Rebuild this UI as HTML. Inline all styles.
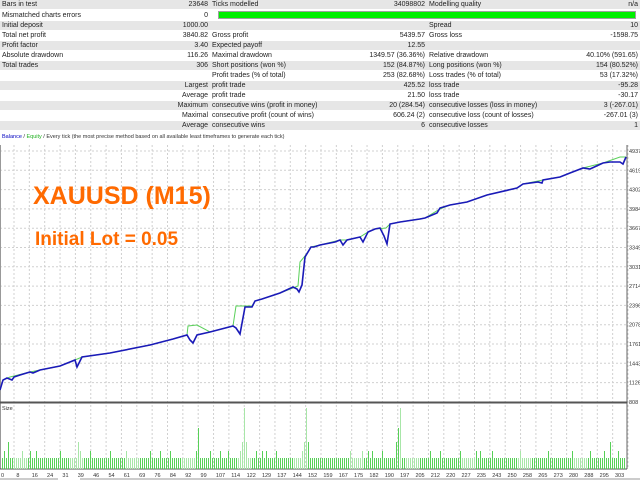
<!DOCTYPE html>
<html><head><meta charset="utf-8"><style>
*{margin:0;padding:0;box-sizing:border-box}
body{width:640px;height:480px;overflow:hidden;background:#fff;font-family:"Liberation Sans",sans-serif;position:relative}
table{position:absolute;left:0;top:0;width:640px;border-collapse:collapse;font-size:7px;color:#222}
td{height:9.85px;line-height:9px;padding:0 2px;white-space:nowrap;border-bottom:1px solid #fff}
tr:nth-child(odd) td{background:#e6e6e6}
.r{text-align:right}
.big{position:absolute;color:#ff6a00;font-weight:bold}
</style></head><body>
<table>
<colgroup><col style="width:210px"><col style="width:217px"><col style="width:213px"></colgroup>
<tr><td>Bars in test<span style="float:right">23648</span></td><td>Ticks modelled<span style="float:right">34098802</span></td><td>Modelling quality<span style="float:right">n/a</span></td></tr>
<tr><td>Mismatched charts errors<span style="float:right">0</span></td><td colspan="2" style="padding:1px 4px 1px 8px"><div style="background:#00f000;height:8px;border:1px solid #a0a0a0"></div></td></tr>
<tr><td>Initial deposit<span style="float:right">1000.00</span></td><td></td><td>Spread<span style="float:right">10</span></td></tr>
<tr><td>Total net profit<span style="float:right">3840.82</span></td><td>Gross profit<span style="float:right">5439.57</span></td><td>Gross loss<span style="float:right">-1598.75</span></td></tr>
<tr><td>Profit factor<span style="float:right">3.40</span></td><td>Expected payoff<span style="float:right">12.55</span></td><td></td></tr>
<tr><td>Absolute drawdown<span style="float:right">116.26</span></td><td>Maximal drawdown<span style="float:right">1349.57 (36.36%)</span></td><td>Relative drawdown<span style="float:right">40.10% (591.65)</span></td></tr>
<tr><td>Total trades<span style="float:right">306</span></td><td>Short positions (won %)<span style="float:right">152 (84.87%)</span></td><td>Long positions (won %)<span style="float:right">154 (80.52%)</span></td></tr>
<tr><td></td><td>Profit trades (% of total)<span style="float:right">253 (82.68%)</span></td><td>Loss trades (% of total)<span style="float:right">53 (17.32%)</span></td></tr>
<tr><td class="r">Largest</td><td>profit trade<span style="float:right">425.52</span></td><td>loss trade<span style="float:right">-95.28</span></td></tr>
<tr><td class="r">Average</td><td>profit trade<span style="float:right">21.50</span></td><td>loss trade<span style="float:right">-30.17</span></td></tr>
<tr><td class="r">Maximum</td><td>consecutive wins (profit in money)<span style="float:right">20 (284.54)</span></td><td>consecutive losses (loss in money)<span style="float:right">3 (-267.01)</span></td></tr>
<tr><td class="r">Maximal</td><td>consecutive profit (count of wins)<span style="float:right">606.24 (2)</span></td><td>consecutive loss (count of losses)<span style="float:right">-267.01 (3)</span></td></tr>
<tr><td class="r">Average</td><td>consecutive wins<span style="float:right">6</span></td><td>consecutive losses<span style="float:right">1</span></td></tr>
</table>
<div style="position:absolute;left:2px;top:134px;font-size:5.5px;color:#333;white-space:nowrap"><span style="color:#0000c0">Balance</span> / <span style="color:#20b020">Equity</span> / Every tick (the most precise method based on all available least timeframes to generate each tick)</div>
<svg id="c" width="640" height="480" style="position:absolute;left:0;top:0" xmlns="http://www.w3.org/2000/svg" font-family="Liberation Sans, sans-serif" font-size="5.5">
<g id="grid" stroke="#d0d0d0" stroke-width="1" stroke-dasharray="2,2"></g>
<line x1="0.5" y1="145" x2="0.5" y2="469" stroke="#999"/>
<line x1="627" y1="145" x2="627" y2="469" stroke="#666"/>
<line x1="0" y1="402.5" x2="627" y2="402.5" stroke="#555" stroke-width="2"/>
<line x1="0" y1="469" x2="627" y2="469" stroke="#555"/>
<line x1="0" y1="479" x2="58" y2="479" stroke="#999"/>
<line x1="80" y1="479" x2="640" y2="479" stroke="#999"/>
<text x="2" y="410" fill="#333">Size</text>
<g id="bars"></g>
<g id="labels" fill="#333"></g>
<polyline fill="none" stroke="#5ad05a" stroke-width="1" points="0,390 3,380 10,377 30,372 60,366 75,360 82,357 110,353 150,345 173,339 187,335 188,326 197,325 210,332 233,326 236,306 245,306 252,306 255,301 262,299 280,293 298,286 300,262 305,256 311,247 320,245 340,240 347,240 360,237 368,232 375,229 386,228 390,224 400,222 425,218 440,209 450,205 467,202 487,195 517,188 523,184 543,180 560,177 570,173 583,168 603,163 620,157 626,157"/>
<polyline fill="none" stroke="#1a1ab8" stroke-width="1.6" points="0,390 3,380 7,378 12,380 14,377 20,375 30,372 33,373 40,370 60,366 75,360 77,367 82,357 110,353 150,345 173,339 187,335 190,340 193,343 197,335 210,332 233,326 236,328 240,334 245,307 252,307 255,301 262,299 280,293 293,287 297,289 299,292 302,285 305,257 311,247 314,247 320,245 335,242 340,240 343,245 347,240 360,237 363,242 368,232 375,229 380,228 384,236 387,244 390,224 400,222 420,219 425,218 437,213 440,208 450,205 467,202 487,195 517,188 523,184 538,182 542,183 543,180 560,177 570,173 583,168 590,169 603,163 610,162 620,162 623,164 626,157"/>
</svg>
<div class="big" style="left:33px;top:182px;font-size:25px">XAUUSD (M15)</div>
<div class="big" style="left:35px;top:229px;font-size:19px">Initial Lot = 0.05</div>
<script>
(function(){
var ns="http://www.w3.org/2000/svg",g=document.getElementById("grid"),L=document.getElementById("labels"),B=document.getElementById("bars");
function el(p,t,a,txt){var e=document.createElementNS(ns,t);for(var k in a)e.setAttribute(k,a[k]);if(txt)e.textContent=txt;p.appendChild(e);}
var ys=["4937","4619","4302","3984","3667","3349","3031","2714","2396","2078","1761","1443","1126","808"];
for(var i=0;i<14;i++){var y=151+i*19.3;if(i<13)el(g,"line",{x1:0,y1:y,x2:627,y2:y});el(L,"text",{x:629,y:y+2},ys[i]);}
for(var i=0;i<41;i++){var x=14+i*15.35;el(g,"line",{x1:x,y1:145,x2:x,y2:469});}
var xs=[0,8,16,24,31,39,46,54,61,69,76,84,92,99,107,114,122,129,137,144,152,159,167,175,182,190,197,205,212,220,227,235,243,250,258,265,273,280,288,295,303];
for(var i=0;i<xs.length;i++)el(L,"text",{x:1+i*15.35,y:477},String(xs[i]));
var tall={4:451,8:442,22:451,59:451,78:442,80:451,195:451,197:442,198:428,240:451,242:442,244:408,246:442,255:451,302:451,304:442,305:428,306:408,308:442,362:451,367:451,372:451,382:451,395:451,396:442,398:428,399:408,430:451,440:451,460:451,475:451,480:451,492:451,520:451,548:451,572:451,590:451,603:451,610:442,618:451,625:442,30:451,35:451,60:451,90:451,110:451,125:451,150:451,160:451,170:451,210:451,220:451,228:451,262:451,265:451,276:451,350:451};
for(var x=2;x<626;x+=2){var tp=tall[x]||tall[x-1]||458;var light=(Math.floor(x/14)%4==1)||(tp<=428&&x%4==0);el(B,"rect",{x:x,y:tp,width:1,height:469-tp,fill:light?"#a8e6a8":"#58d058"});}
})();
</script>
</body></html>
